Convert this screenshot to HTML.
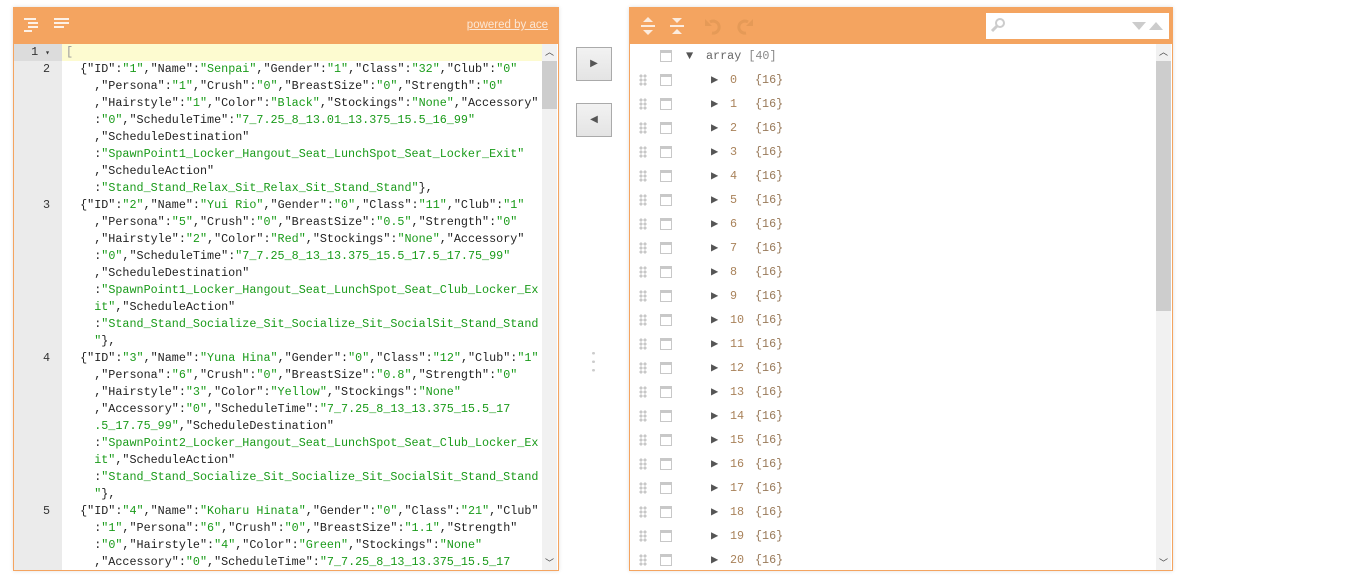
<!DOCTYPE html>
<html><head><meta charset="utf-8"><style>
*{margin:0;padding:0;box-sizing:border-box}
body{width:1364px;height:579px;background:#fff;position:relative;overflow:hidden;font-family:"Liberation Sans",sans-serif}
.panel{position:absolute;top:7px;height:564px;border:1px solid #f4a460;background:#fff;box-shadow:0 0 4px rgba(0,0,0,.12)}
.hdr{position:absolute;left:0;top:0;right:0;height:36px;background:#f4a460}
.gut{position:absolute;left:0;top:36px;width:48px;bottom:0;background:#ebebeb}
.code{position:absolute;left:0;top:36px;right:0;bottom:0;font-family:"Liberation Mono",monospace;font-size:11.75px;color:#222}
.r{position:absolute;left:0;right:16px;height:17px;line-height:17px;white-space:pre}
.r .n{position:absolute;left:0;width:36px;text-align:right;color:#333}
.r .t{position:absolute;left:52px}
.s{color:#1a9b1a}
.sb{position:absolute;right:1px;width:15px;background:#f1f1f1}
.th{position:absolute;left:0;right:0;background:#cdcdcd}
.tr{position:absolute;left:0;right:16px;height:24px;line-height:24px;font-family:"Liberation Mono",monospace;font-size:11.75px}
.dh{position:absolute;left:9px;top:6px;width:8px;height:12px;background:radial-gradient(circle,#c8c8c8 1.5px,transparent 1.6px) 0 0/4px 4px}
.cb{position:absolute;left:30px;top:6px;width:12px;height:12px;border:1px solid #c8c8c8;border-top-width:3px}
.tri{position:absolute;color:#555;font-size:12px}
.btn{position:absolute;left:576px;width:36px;height:34px;border:1px solid #aaa;background:linear-gradient(#f2f2f2,#e4e4e4);color:#555;font-size:10px;text-align:center;line-height:32px}
</style></head><body>

<div class="panel" style="left:13px;width:546px">
 <div class="hdr">
  <svg style="position:absolute;left:10px;top:9px" width="18" height="16"><g fill="#fff" opacity=".85"><rect x="0" y="1" width="12" height="2"/><rect x="4" y="5" width="10" height="2"/><rect x="4" y="9" width="10" height="2"/><rect x="0" y="13" width="8" height="2"/></g></svg>
  <svg style="position:absolute;left:40px;top:9px" width="18" height="16"><g fill="#fff" opacity=".85"><rect x="0" y="1" width="15" height="2"/><rect x="0" y="5" width="15" height="2"/><rect x="0" y="9" width="10" height="2"/></g></svg>
  <span style="position:absolute;right:10px;top:11px;font-size:11.5px;text-decoration:underline;color:#fbe7d6">powered by ace</span>
 </div>
 <div class="gut"></div>
 <div style="position:absolute;left:0;top:36px;width:48px;height:17px;background:#dcdcdc"></div>
 <div style="position:absolute;left:48px;top:36px;right:16px;height:17px;background:#fdfbd0"></div>
 <div class="code">
<div class="r" style="top:0"><span class="n">1 <span style="font-size:8px">▾</span></span><span class="t" style="color:#999">[</span></div>
<div class="r" style="top:17px"><span class="n">2</span><span class="t">  {"ID":<span class="s">"1"</span>,"Name":<span class="s">"Senpai"</span>,"Gender":<span class="s">"1"</span>,"Class":<span class="s">"32"</span>,"Club":<span class="s">"0"</span></span></div>
<div class="r" style="top:34px"><span class="t">    ,"Persona":<span class="s">"1"</span>,"Crush":<span class="s">"0"</span>,"BreastSize":<span class="s">"0"</span>,"Strength":<span class="s">"0"</span></span></div>
<div class="r" style="top:51px"><span class="t">    ,"Hairstyle":<span class="s">"1"</span>,"Color":<span class="s">"Black"</span>,"Stockings":<span class="s">"None"</span>,"Accessory"</span></div>
<div class="r" style="top:68px"><span class="t">    :<span class="s">"0"</span>,"ScheduleTime":<span class="s">"7_7.25_8_13.01_13.375_15.5_16_99"</span></span></div>
<div class="r" style="top:85px"><span class="t">    ,"ScheduleDestination"</span></div>
<div class="r" style="top:102px"><span class="t">    :<span class="s">"SpawnPoint1_Locker_Hangout_Seat_LunchSpot_Seat_Locker_Exit"</span></span></div>
<div class="r" style="top:119px"><span class="t">    ,"ScheduleAction"</span></div>
<div class="r" style="top:136px"><span class="t">    :<span class="s">"Stand_Stand_Relax_Sit_Relax_Sit_Stand_Stand"</span>},</span></div>
<div class="r" style="top:153px"><span class="n">3</span><span class="t">  {"ID":<span class="s">"2"</span>,"Name":<span class="s">"Yui Rio"</span>,"Gender":<span class="s">"0"</span>,"Class":<span class="s">"11"</span>,"Club":<span class="s">"1"</span></span></div>
<div class="r" style="top:170px"><span class="t">    ,"Persona":<span class="s">"5"</span>,"Crush":<span class="s">"0"</span>,"BreastSize":<span class="s">"0.5"</span>,"Strength":<span class="s">"0"</span></span></div>
<div class="r" style="top:187px"><span class="t">    ,"Hairstyle":<span class="s">"2"</span>,"Color":<span class="s">"Red"</span>,"Stockings":<span class="s">"None"</span>,"Accessory"</span></div>
<div class="r" style="top:204px"><span class="t">    :<span class="s">"0"</span>,"ScheduleTime":<span class="s">"7_7.25_8_13_13.375_15.5_17.5_17.75_99"</span></span></div>
<div class="r" style="top:221px"><span class="t">    ,"ScheduleDestination"</span></div>
<div class="r" style="top:238px"><span class="t">    :<span class="s">"SpawnPoint1_Locker_Hangout_Seat_LunchSpot_Seat_Club_Locker_Ex</span></span></div>
<div class="r" style="top:255px"><span class="t"><span class="s">    it"</span>,"ScheduleAction"</span></div>
<div class="r" style="top:272px"><span class="t">    :<span class="s">"Stand_Stand_Socialize_Sit_Socialize_Sit_SocialSit_Stand_Stand</span></span></div>
<div class="r" style="top:289px"><span class="t"><span class="s">    "</span>},</span></div>
<div class="r" style="top:306px"><span class="n">4</span><span class="t">  {"ID":<span class="s">"3"</span>,"Name":<span class="s">"Yuna Hina"</span>,"Gender":<span class="s">"0"</span>,"Class":<span class="s">"12"</span>,"Club":<span class="s">"1"</span></span></div>
<div class="r" style="top:323px"><span class="t">    ,"Persona":<span class="s">"6"</span>,"Crush":<span class="s">"0"</span>,"BreastSize":<span class="s">"0.8"</span>,"Strength":<span class="s">"0"</span></span></div>
<div class="r" style="top:340px"><span class="t">    ,"Hairstyle":<span class="s">"3"</span>,"Color":<span class="s">"Yellow"</span>,"Stockings":<span class="s">"None"</span></span></div>
<div class="r" style="top:357px"><span class="t">    ,"Accessory":<span class="s">"0"</span>,"ScheduleTime":<span class="s">"7_7.25_8_13_13.375_15.5_17</span></span></div>
<div class="r" style="top:374px"><span class="t"><span class="s">    .5_17.75_99"</span>,"ScheduleDestination"</span></div>
<div class="r" style="top:391px"><span class="t">    :<span class="s">"SpawnPoint2_Locker_Hangout_Seat_LunchSpot_Seat_Club_Locker_Ex</span></span></div>
<div class="r" style="top:408px"><span class="t"><span class="s">    it"</span>,"ScheduleAction"</span></div>
<div class="r" style="top:425px"><span class="t">    :<span class="s">"Stand_Stand_Socialize_Sit_Socialize_Sit_SocialSit_Stand_Stand</span></span></div>
<div class="r" style="top:442px"><span class="t"><span class="s">    "</span>},</span></div>
<div class="r" style="top:459px"><span class="n">5</span><span class="t">  {"ID":<span class="s">"4"</span>,"Name":<span class="s">"Koharu Hinata"</span>,"Gender":<span class="s">"0"</span>,"Class":<span class="s">"21"</span>,"Club"</span></div>
<div class="r" style="top:476px"><span class="t">    :<span class="s">"1"</span>,"Persona":<span class="s">"6"</span>,"Crush":<span class="s">"0"</span>,"BreastSize":<span class="s">"1.1"</span>,"Strength"</span></div>
<div class="r" style="top:493px"><span class="t">    :<span class="s">"0"</span>,"Hairstyle":<span class="s">"4"</span>,"Color":<span class="s">"Green"</span>,"Stockings":<span class="s">"None"</span></span></div>
<div class="r" style="top:510px"><span class="t">    ,"Accessory":<span class="s">"0"</span>,"ScheduleTime":<span class="s">"7_7.25_8_13_13.375_15.5_17</span></span></div>
 </div>
 <div class="sb" style="top:36px;bottom:0"><div class="th" style="top:17px;height:48px"></div>
  <div style="position:absolute;top:0;width:15px;text-align:center;font-size:9px;color:#444;line-height:17px">︿</div>
  <div style="position:absolute;bottom:0;width:15px;text-align:center;font-size:9px;color:#444;line-height:14px">﹀</div></div>
</div>

<div class="btn" style="top:47px">▶</div>
<div class="btn" style="top:103px">◀</div>
<div style="position:absolute;left:592px;top:349px;width:3px;height:26px;background:radial-gradient(circle,#ccc 1.3px,transparent 1.5px) 0 0/3px 8.5px"></div>

<div class="panel" style="left:629px;width:544px">
 <div class="hdr">
  <svg style="position:absolute;left:10px;top:8px" width="16" height="20"><g fill="#fff" opacity=".8"><path d="M8 1l5 5H3z"/><rect x="1" y="9" width="14" height="2"/><path d="M8 19l5-5H3z"/></g></svg>
  <svg style="position:absolute;left:39px;top:8px" width="16" height="20"><g fill="#fff" opacity=".8"><path d="M8 7l5-5H3z"/><rect x="1" y="9" width="14" height="2"/><path d="M8 13l5 5H3z"/></g></svg>
  <svg style="position:absolute;left:74px;top:8px" width="20" height="20"><path d="M6 6a6 6 0 1 1 2 11" fill="none" stroke="#e59a57" stroke-width="3"/><path d="M1 3v7h7z" fill="#e59a57"/></svg>
  <svg style="position:absolute;left:104px;top:8px" width="20" height="20"><path d="M14 6a6 6 0 1 0-2 11" fill="none" stroke="#e59a57" stroke-width="3"/><path d="M19 3v7h-7z" fill="#e59a57"/></svg>
  <div style="position:absolute;left:356px;top:5px;width:183px;height:26px;background:#fff">
   <svg style="position:absolute;left:4px;top:4px" width="16" height="16"><circle cx="10" cy="6" r="4" fill="none" stroke="#ccc" stroke-width="2"/><path d="M7 9l-5 5" stroke="#ccc" stroke-width="3"/></svg>
   <svg style="position:absolute;left:145px;top:8px" width="34" height="10"><path d="M1 1h14l-7 8z" fill="#ccc"/><path d="M18 9h14l-7-8z" fill="#ccc"/></svg>
  </div>
 </div>
 <div style="position:absolute;left:0;top:36px;right:0;bottom:0">
  <div class="tr" style="top:0"><div class="cb"></div><span class="tri" style="left:56px">▼</span><span style="position:absolute;left:76px;color:#666">array <span style="color:#888">[40]</span></span></div>
  <div class="tr" style="top:24px"><div class="dh"></div><div class="cb"></div><span class="tri" style="left:81px">▶</span><span style="position:absolute;left:100px;color:#a9825a">0</span><span style="position:absolute;left:125px;color:#997a5a">{16}</span></div>
  <div class="tr" style="top:48px"><div class="dh"></div><div class="cb"></div><span class="tri" style="left:81px">▶</span><span style="position:absolute;left:100px;color:#a9825a">1</span><span style="position:absolute;left:125px;color:#997a5a">{16}</span></div>
  <div class="tr" style="top:72px"><div class="dh"></div><div class="cb"></div><span class="tri" style="left:81px">▶</span><span style="position:absolute;left:100px;color:#a9825a">2</span><span style="position:absolute;left:125px;color:#997a5a">{16}</span></div>
  <div class="tr" style="top:96px"><div class="dh"></div><div class="cb"></div><span class="tri" style="left:81px">▶</span><span style="position:absolute;left:100px;color:#a9825a">3</span><span style="position:absolute;left:125px;color:#997a5a">{16}</span></div>
  <div class="tr" style="top:120px"><div class="dh"></div><div class="cb"></div><span class="tri" style="left:81px">▶</span><span style="position:absolute;left:100px;color:#a9825a">4</span><span style="position:absolute;left:125px;color:#997a5a">{16}</span></div>
  <div class="tr" style="top:144px"><div class="dh"></div><div class="cb"></div><span class="tri" style="left:81px">▶</span><span style="position:absolute;left:100px;color:#a9825a">5</span><span style="position:absolute;left:125px;color:#997a5a">{16}</span></div>
  <div class="tr" style="top:168px"><div class="dh"></div><div class="cb"></div><span class="tri" style="left:81px">▶</span><span style="position:absolute;left:100px;color:#a9825a">6</span><span style="position:absolute;left:125px;color:#997a5a">{16}</span></div>
  <div class="tr" style="top:192px"><div class="dh"></div><div class="cb"></div><span class="tri" style="left:81px">▶</span><span style="position:absolute;left:100px;color:#a9825a">7</span><span style="position:absolute;left:125px;color:#997a5a">{16}</span></div>
  <div class="tr" style="top:216px"><div class="dh"></div><div class="cb"></div><span class="tri" style="left:81px">▶</span><span style="position:absolute;left:100px;color:#a9825a">8</span><span style="position:absolute;left:125px;color:#997a5a">{16}</span></div>
  <div class="tr" style="top:240px"><div class="dh"></div><div class="cb"></div><span class="tri" style="left:81px">▶</span><span style="position:absolute;left:100px;color:#a9825a">9</span><span style="position:absolute;left:125px;color:#997a5a">{16}</span></div>
  <div class="tr" style="top:264px"><div class="dh"></div><div class="cb"></div><span class="tri" style="left:81px">▶</span><span style="position:absolute;left:100px;color:#a9825a">10</span><span style="position:absolute;left:125px;color:#997a5a">{16}</span></div>
  <div class="tr" style="top:288px"><div class="dh"></div><div class="cb"></div><span class="tri" style="left:81px">▶</span><span style="position:absolute;left:100px;color:#a9825a">11</span><span style="position:absolute;left:125px;color:#997a5a">{16}</span></div>
  <div class="tr" style="top:312px"><div class="dh"></div><div class="cb"></div><span class="tri" style="left:81px">▶</span><span style="position:absolute;left:100px;color:#a9825a">12</span><span style="position:absolute;left:125px;color:#997a5a">{16}</span></div>
  <div class="tr" style="top:336px"><div class="dh"></div><div class="cb"></div><span class="tri" style="left:81px">▶</span><span style="position:absolute;left:100px;color:#a9825a">13</span><span style="position:absolute;left:125px;color:#997a5a">{16}</span></div>
  <div class="tr" style="top:360px"><div class="dh"></div><div class="cb"></div><span class="tri" style="left:81px">▶</span><span style="position:absolute;left:100px;color:#a9825a">14</span><span style="position:absolute;left:125px;color:#997a5a">{16}</span></div>
  <div class="tr" style="top:384px"><div class="dh"></div><div class="cb"></div><span class="tri" style="left:81px">▶</span><span style="position:absolute;left:100px;color:#a9825a">15</span><span style="position:absolute;left:125px;color:#997a5a">{16}</span></div>
  <div class="tr" style="top:408px"><div class="dh"></div><div class="cb"></div><span class="tri" style="left:81px">▶</span><span style="position:absolute;left:100px;color:#a9825a">16</span><span style="position:absolute;left:125px;color:#997a5a">{16}</span></div>
  <div class="tr" style="top:432px"><div class="dh"></div><div class="cb"></div><span class="tri" style="left:81px">▶</span><span style="position:absolute;left:100px;color:#a9825a">17</span><span style="position:absolute;left:125px;color:#997a5a">{16}</span></div>
  <div class="tr" style="top:456px"><div class="dh"></div><div class="cb"></div><span class="tri" style="left:81px">▶</span><span style="position:absolute;left:100px;color:#a9825a">18</span><span style="position:absolute;left:125px;color:#997a5a">{16}</span></div>
  <div class="tr" style="top:480px"><div class="dh"></div><div class="cb"></div><span class="tri" style="left:81px">▶</span><span style="position:absolute;left:100px;color:#a9825a">19</span><span style="position:absolute;left:125px;color:#997a5a">{16}</span></div>
  <div class="tr" style="top:504px"><div class="dh"></div><div class="cb"></div><span class="tri" style="left:81px">▶</span><span style="position:absolute;left:100px;color:#a9825a">20</span><span style="position:absolute;left:125px;color:#997a5a">{16}</span></div>
 </div>
 <div class="sb" style="top:36px;bottom:0"><div class="th" style="top:17px;height:250px"></div>
  <div style="position:absolute;top:0;width:15px;text-align:center;font-size:9px;color:#444;line-height:17px">︿</div>
  <div style="position:absolute;bottom:0;width:15px;text-align:center;font-size:9px;color:#444;line-height:14px">﹀</div></div>
</div>
</body></html>
